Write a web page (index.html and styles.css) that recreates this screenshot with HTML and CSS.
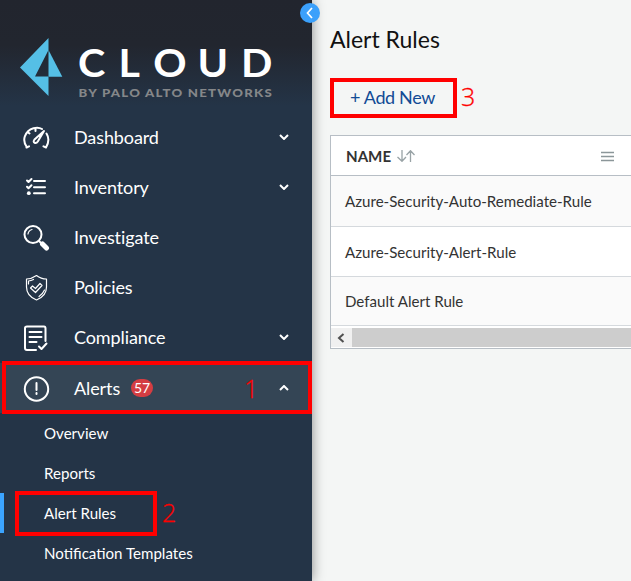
FILE: index.html
```html
<!DOCTYPE html>
<html lang="en">
<head>
<meta charset="utf-8">
<title>Alert Rules</title>
<link rel="stylesheet" href="styles.css">
</head>
<body>
<div class="app">
  <aside class="sidebar">
    <header class="brand">
      <svg class="logo" viewBox="0 0 312 113" role="img" aria-label="Cloud by Palo Alto Networks">
        <path class="mark" fill-rule="evenodd" d="M48.500 38V96L20 67.500ZM48 51L35 76.500H48Z"/>
        <path class="mark" d="M49 51L62.300 76.800H49Z"/>
        <text class="wordmark" transform="scale(1.1 1)" y="77" x="70.800 107.800 139.300 179.500 219.200">CLOUD</text>
        <text class="tagline" transform="scale(1.15 1)" x="68.300" y="97" textLength="168">BY PALO ALTO NETWORKS</text>
      </svg>
    </header>
    <nav>
      <a class="item"><svg class="icon" viewBox="0 0 28 28"><g class="line s2"><path d="M5 23.500Q1 18 2.800 12.500Q5 6 11.500 4.200Q16.500 2.800 20 5M24.500 9.500Q28.500 16 24 23.500M4.500 23.500L7 22.300M24 23.500L21.500 22.300M13.500 4V7M5.500 8L7.500 9.500"/><path d="M22 7L12.500 15.500Q10.800 18 12.600 18.800Q14.500 19.500 15.800 17.500Z"/></g></svg><span>Dashboard</span><svg class="chev" viewBox="0 0 10 6"><path d="M1 1L5 5L9 1"/></svg></a>
      <a class="item"><svg class="icon" viewBox="0 0 28 28"><g class="line s2"><path d="M12 7H23M12 13.200H23M12 19.200H23M5 6.500L6.500 8L9.500 5M5 12.800L6.500 14.300L9.500 11.300"/></g><circle cx="6.800" cy="19.200" r="1.900" fill="#fff"/></svg><span>Inventory</span><svg class="chev" viewBox="0 0 10 6"><path d="M1 1L5 5L9 1"/></svg></a>
      <a class="item"><svg class="icon" viewBox="0 0 28 28"><g class="line s2"><circle cx="11" cy="10.500" r="8.500"/><path d="M17 17L19 19"/></g><path class="line thin" d="M6 10Q6.500 6.500 10 5.500"/><path class="line handle" d="M20.500 20L24.500 24"/></svg><span>Investigate</span></a>
      <a class="item"><svg class="icon" viewBox="0 0 28 28"><g class="line thin"><path d="M14.500 1.500Q19 5 24.500 5V13Q24.500 22 14.500 26Q4.500 22 4.500 13V5Q9.500 5 14.500 1.500Z"/><path d="M6.500 10V7Q9 6.800 11.500 5.500M22.500 16Q20.500 20.500 17 22.500"/><path d="M8.500 14L10.500 12L13.500 14.500L18 9.500L20 11.500L13.500 18.500Z"/></g></svg><span>Policies</span></a>
      <a class="item"><svg class="icon" viewBox="0 0 28 28"><g class="line s2"><path d="M14 26H5Q3 26 3 24V4Q3 2.500 5 2.500H22Q23.500 2.500 23.500 4.500V17M7.500 8H19.500M7.500 13H19.500M7.500 18H14.500M17 22.500L19.500 25L24.500 19.500"/></g></svg><span>Compliance</span><svg class="chev" viewBox="0 0 10 6"><path d="M1 1L5 5L9 1"/></svg></a>
      <a class="item active"><svg class="icon" viewBox="0 0 28 28"><circle class="line s2" cx="14.500" cy="15" r="11.700"/><path class="line s2" d="M14.500 9V16M14.500 19V20"/></svg><span>Alerts</span><b class="count">57</b><svg class="chev" viewBox="0 0 10 6"><path d="M1 5L5 1L9 5"/></svg></a>
      <div class="sub">
        <a>Overview</a>
        <a>Reports</a>
        <a class="current">Alert Rules</a>
        <a>Notification Templates</a>
      </div>
    </nav>
    <button class="collapse" aria-label="Collapse"><svg viewBox="0 0 20 20"><path d="M12 5L7.500 10L12 15"/></svg></button>
  </aside>
  <main class="content">
    <h1>Alert Rules</h1>
    <button class="add">+ Add New</button>
    <section class="table">
      <div class="head"><b>NAME</b><svg class="sort" viewBox="0 0 18 12"><path d="M5 0V11M.500 7L5 11.300L9 7M13.500 12V1M9.500 5L13.500 .700L17.500 5"/></svg><svg class="menu" viewBox="0 0 13 11"><path d="M0 1.500H13M0 5.500H13M0 9.500H13"/></svg></div>
      <div class="row odd">Azure-Security-Auto-Remediate-Rule</div>
      <div class="row">Azure-Security-Alert-Rule</div>
      <div class="row odd last">Default Alert Rule</div>
      <div class="scroll"><span class="arrow"><svg viewBox="0 0 8 10"><path d="M6.500 1L2 5L6.500 9"/></svg></span><span class="thumb"></span></div>
    </section>
  </main>
  <div class="mark-box one"></div><span class="num n1">1</span>
  <div class="mark-box two"></div><span class="num n2">2</span>
  <div class="mark-box three"></div><span class="num n3">3</span>
</div>
</body>
</html>
```
FILE: styles.css
```css
* { box-sizing: border-box; }
body { margin: 0; font-family: Lato, sans-serif; background: #f4f6f5; }
button { font: inherit; border: 0; padding: 0; background: none; text-align: left; }
.app { position: relative; display: flex; width: 631px; height: 581px; overflow: hidden; }
.sidebar { position: relative; z-index: 1; width: 312px; flex: none; background: #243447; box-shadow: 0 0 12px rgba(0,0,0,.45); color: #fff; }
.brand { height: 113px; background: linear-gradient(#22252e 0, #22262f 45px, #243447 106px); }
.logo { display: block; width: 312px; height: 113px; }
.mark { fill: #55bfe6; }
.wordmark { font: 700 37.500px Lato, sans-serif; fill: #fff; }
.tagline { font: 900 11.500px Lato, sans-serif; fill: #858789; }
.item { display: flex; align-items: center; height: 50px; padding: 0 23px 1px 22px; font-size: 18px; letter-spacing: -.1px; }
.item span { margin-bottom: 2px; }
.item.active { background: #344555; }
.item.active span { margin: 0; padding-top: 1px; }
.icon { width: 28px; height: 28px; margin-right: 24px; }
.line { fill: none; stroke: #fff; stroke-linecap: round; stroke-linejoin: round; }
.s2 { stroke-width: 2; }
.thin { stroke-width: 1.200; }
.handle { stroke-width: 5; }
.chev { width: 10px; height: 6px; margin: 0 0 1px auto; fill: none; stroke: #fff; stroke-width: 2; }
.active .chev { margin-bottom: 0; }
.count { width: 22px; height: 18px; margin: 1px 0 0 11px; border-radius: 9px; background: #d43d42; font-weight: 400; font-size: 14px; line-height: 17px; text-align: center; }
.sub a { display: flex; align-items: center; height: 40px; padding-left: 44px; font-size: 15.100px; }
.sub .current { border-left: 4px solid #3ba4ff; padding-left: 40px; }
.collapse { position: absolute; left: 300px; top: 3px; width: 20px; height: 20px; border-radius: 50%; background: #3ba0fb; }
.collapse svg { display: block; fill: none; stroke: #fff; stroke-width: 1.700; }
.content { flex: 1; padding: 24px 0 0 18px; }
h1 { margin: 0; font-size: 23px; line-height: 30px; font-weight: 400; color: #111; }
.add { display: block; height: 40px; margin-top: 24px; padding: 0 0 2px 20px; font-size: 18px; letter-spacing: -.350px; color: #114b95; }
.table { width: 310px; height: 214px; margin-top: 17px; border: 1px solid #b7bec5; background: #fff; color: #333; font-size: 15.100px; }
.head { display: flex; align-items: center; height: 40px; padding-left: 15px; border-bottom: 1px solid #b7bec5; }
.sort { width: 18px; height: 12px; margin-left: 6px; fill: none; stroke: #99a3a6; stroke-width: 1.300; }
.menu { width: 13px; height: 11px; margin-left: auto; margin-right: 25px; margin-top: 2px; stroke: #8b9699; stroke-width: 1.300; }
.row { display: flex; align-items: center; height: 50px; padding-left: 14px; border-bottom: 1px solid #d5d9dd; }
.odd { background: #fafafa; }
.row:nth-child(2) { height: 51px; }
.last { height: 49px; }
.scroll { display: flex; height: 19px; margin-top: 2px; background: #cdcdcd; }
.arrow { display: flex; align-items: center; justify-content: center; width: 21px; padding-right: 2px; background: #f0f0f0; }
.arrow svg { width: 8px; height: 10px; fill: none; stroke: #505050; stroke-width: 2; }
.thumb { flex: 1; }
.mark-box { position: absolute; z-index: 2; border: 4px solid #f00; }
.one { left: 2px; top: 361px; width: 310px; height: 53px; }
.two { left: 15px; top: 491px; width: 142px; height: 45px; }
.three { left: 330px; top: 78px; width: 127px; height: 40px; }
.num { position: absolute; z-index: 2; color: #f00; font: 300 25px/30px "Open Sans", sans-serif; -webkit-text-stroke: .3px #f00; }
.n1 { left: 244px; top: 373px; }
.n2 { left: 162px; top: 497px; }
.n3 { left: 461px; top: 81px; }
```
